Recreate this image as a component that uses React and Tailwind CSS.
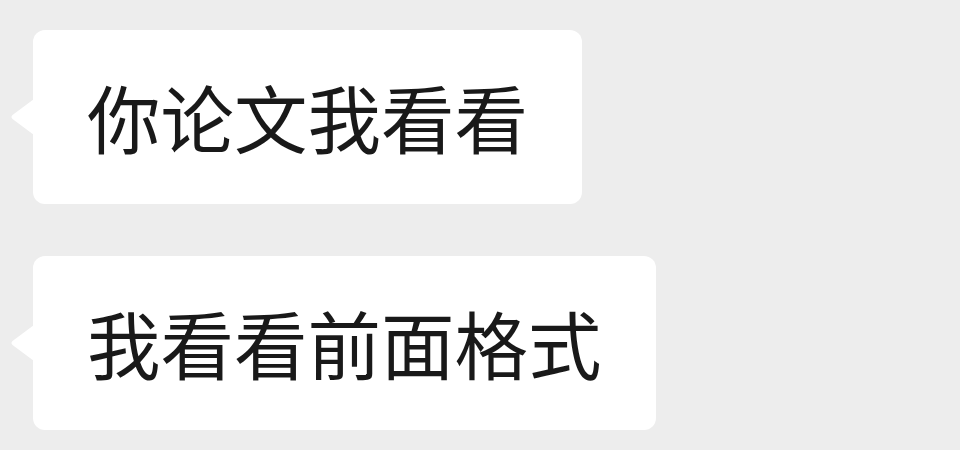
import React from 'react'

const MESSAGES = ['你论文我看看', '我看看前面格式']

function Bubble({ text }) {
  return (
    <div className="relative self-start">
      {/* Left tail */}
      <svg
        className="absolute left-[-23px] top-1/2 -translate-y-1/2"
        width="24" height="36" viewBox="0 0 24 36"
      >
        <path d="M24 0 L2.5 16 Q0.5 18 2.5 20 L24 36 Z" fill="#ffffff" />
      </svg>
      <div
        className="h-[174px] flex items-center px-[54px] bg-white rounded-[12px] text-[73.5px] text-[#191919] leading-none whitespace-nowrap"
        style={{ fontFamily: '"Noto Sans CJK SC", "Noto Sans", sans-serif' }}
      >
        {text}
      </div>
    </div>
  )
}

export default function App() {
  return (
    <div className="w-[960px] h-[450px] bg-[#ededed] overflow-hidden">
      <div className="flex flex-col gap-[52px] pt-[30px] pl-[33px]">
        {MESSAGES.map((m) => (
          <Bubble key={m} text={m} />
        ))}
      </div>
    </div>
  )
}
